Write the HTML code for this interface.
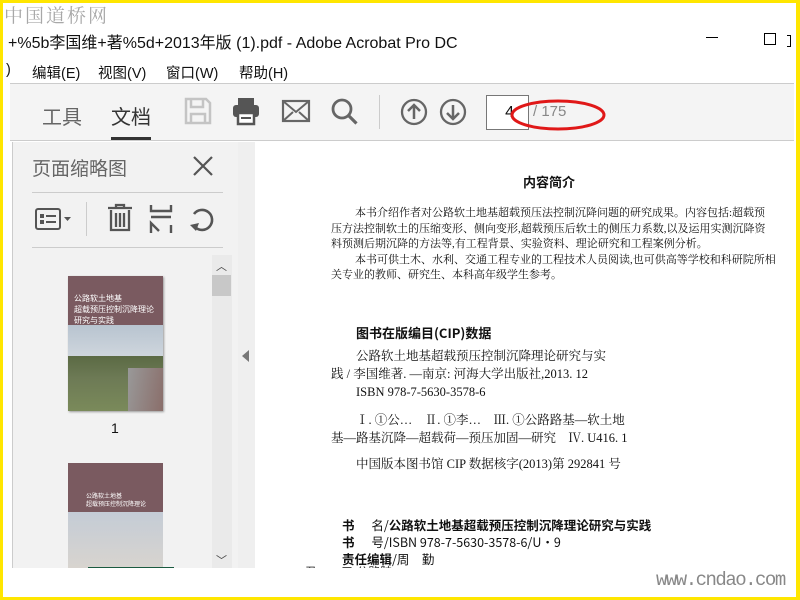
<!DOCTYPE html>
<html><head><meta charset="utf-8"><style>
*{margin:0;padding:0;box-sizing:border-box}
body{width:800px;height:600px;overflow:hidden;background:#fff;position:relative;font-family:"Liberation Sans","Noto Sans CJK SC",sans-serif}
.a{position:absolute}
.cn{font-family:"Liberation Serif","Noto Serif CJK SC",serif;color:#111}
</style></head><body>
<div class="a" style="left:0;top:0;width:800px;height:600px;border:3px solid #ffe600;border-right-width:4px;z-index:10;pointer-events:none"></div>
<div class="a" style="left:4px;top:1px;font-size:19px;color:#a8a8a8;font-family:'Noto Serif CJK SC',serif;letter-spacing:2px">中国道桥网</div>
<div class="a" style="left:8px;top:29px;font-size:16px;color:#111">+%5b李国维+著%5d+2013年版 (1).pdf - Adobe Acrobat Pro DC</div>
<div class="a" style="left:706px;top:37px;width:12px;height:1px;background:#000"></div>
<div class="a" style="left:764px;top:33px;width:12px;height:12px;border:1px solid #000"></div>
<div class="a" style="left:787px;top:35px;width:4px;height:12px;border:1px solid #000;border-left:none"></div>
<div class="a" style="left:6px;top:62px;font-size:14.5px;color:#111">)</div>
<div class="a" style="left:32px;top:62px;font-size:14.5px;color:#111">编辑(E)</div>
<div class="a" style="left:98px;top:62px;font-size:14.5px;color:#111">视图(V)</div>
<div class="a" style="left:166px;top:62px;font-size:14.5px;color:#111">窗口(W)</div>
<div class="a" style="left:239px;top:62px;font-size:14.5px;color:#111">帮助(H)</div>
<!-- toolbar -->
<div class="a" style="left:10px;top:83px;width:784px;height:58px;background:#f4f4f4;border-top:1px solid #ccc;border-bottom:1px solid #ccc"></div>
<div class="a" style="left:42px;top:101px;font-size:20px;color:#666">工具</div>
<div class="a" style="left:111px;top:101px;font-size:20px;color:#333">文档</div>
<div class="a" style="left:111px;top:137px;width:40px;height:3px;background:#333"></div>
<svg class="a" style="left:183px;top:96px" width="30" height="30" viewBox="0 0 30 30"><path d="M3 3h20l4 4v20H3z M8 3v8h12V3 M8 27v-9h14v9" fill="none" stroke="#c4c4c4" stroke-width="2.5"/></svg>
<svg class="a" style="left:231px;top:96px" width="30" height="30" viewBox="0 0 30 30"><rect x="7" y="2" width="16" height="8" fill="#555"/><rect x="2" y="9" width="26" height="12" rx="3" fill="#555"/><rect x="7" y="17" width="16" height="11" fill="#fff" stroke="#555" stroke-width="2.5"/><rect x="10" y="21" width="10" height="2" fill="#555"/></svg>
<svg class="a" style="left:281px;top:99px" width="30" height="24" viewBox="0 0 30 24"><rect x="2" y="2" width="26" height="20" fill="none" stroke="#666" stroke-width="2.2"/><path d="M2 2l13 11 13-11M2 22l10-9M28 22l-10-9" fill="none" stroke="#666" stroke-width="2"/></svg>
<svg class="a" style="left:330px;top:97px" width="30" height="30" viewBox="0 0 30 30"><circle cx="12" cy="12" r="9" fill="none" stroke="#666" stroke-width="2.8"/><path d="M18.5 18.5l8 8" stroke="#666" stroke-width="3.2"/></svg>
<div class="a" style="left:379px;top:95px;width:1px;height:34px;background:#ccc"></div>
<svg class="a" style="left:400px;top:98px" width="28" height="28" viewBox="0 0 28 28"><circle cx="14" cy="14" r="12" fill="none" stroke="#666" stroke-width="2.3"/><path d="M14 21V8M8 13l6-6 6 6" fill="none" stroke="#666" stroke-width="2.5"/></svg>
<svg class="a" style="left:439px;top:98px" width="28" height="28" viewBox="0 0 28 28"><circle cx="14" cy="14" r="12" fill="none" stroke="#666" stroke-width="2.3"/><path d="M14 7v13M8 15l6 6 6-6" fill="none" stroke="#666" stroke-width="2.5"/></svg>
<div class="a" style="left:486px;top:95px;width:43px;height:35px;border:1px solid #777;background:#fff;font-size:16px;text-align:right;padding:8px 14px 0 0;color:#111">4</div>
<div class="a" style="left:533px;top:103px;font-size:15px;color:#888">/ 175</div>
<svg class="a" style="left:508px;top:96px" width="100" height="40" viewBox="0 0 100 40"><ellipse cx="50" cy="19" rx="46" ry="14" fill="none" stroke="#e01818" stroke-width="3"/></svg>
<!-- left panel -->
<div class="a" style="left:12px;top:142px;width:226px;height:426px;background:#f2f2f2;border-left:1px solid #ccc"></div>
<div class="a" style="left:32px;top:154px;font-size:19px;color:#666">页面缩略图</div>
<svg class="a" style="left:192px;top:155px" width="22" height="22" viewBox="0 0 22 22"><path d="M2 2l18 18M20 2L2 20" stroke="#555" stroke-width="2.2"/></svg>
<div class="a" style="left:32px;top:192px;width:191px;height:1px;background:#ccc"></div>
<svg class="a" style="left:35px;top:207px" width="40" height="24" viewBox="0 0 40 24"><rect x="1" y="2" width="24" height="20" rx="2" fill="none" stroke="#555" stroke-width="2"/><rect x="5" y="7" width="4" height="4" fill="#555"/><rect x="5" y="13" width="4" height="4" fill="#555"/><rect x="11" y="8" width="10" height="2" fill="#555"/><rect x="11" y="14" width="10" height="2" fill="#555"/><path d="M29 10h7l-3.5 4z" fill="#555"/></svg>
<div class="a" style="left:86px;top:202px;width:1px;height:34px;background:#ccc"></div>
<svg class="a" style="left:106px;top:203px" width="28" height="30" viewBox="0 0 28 30"><path d="M2 5h24M10 5V2h8v3M5 7v20h18V7M10 10v14M14 10v14M18 10v14" fill="none" stroke="#555" stroke-width="2.3"/></svg>
<svg class="a" style="left:148px;top:205px" width="26" height="28" viewBox="0 0 26 28"><path d="M3 0v6h20V0M3 28V18l8 8M23 28V20M3 12h20" fill="none" stroke="#555" stroke-width="2.4"/></svg>
<svg class="a" style="left:189px;top:205px" width="28" height="28" viewBox="0 0 28 28"><path d="M6 22A10 10 0 1 0 5 9" fill="none" stroke="#555" stroke-width="2.6"/><path d="M1 20l6 6 3-8z" fill="#555"/></svg>
<div class="a" style="left:32px;top:247px;width:191px;height:1px;background:#ccc"></div>
<div class="a" style="left:212px;top:255px;width:20px;height:313px;background:#eaeaea"></div>
<div class="a" style="left:212px;top:275px;width:19px;height:21px;background:#c8c8c8"></div>
<div class="a" style="left:216px;top:258px;font-size:11px;color:#444">︿</div>
<div class="a" style="left:216px;top:552px;font-size:11px;color:#444">﹀</div>
<div class="a" style="left:68px;top:276px;width:95px;height:135px;background:#7a5a60;overflow:hidden;box-shadow:1px 1px 2px #999">
<div style="position:absolute;left:0;top:49px;width:95px;height:45px;background:linear-gradient(#b8c4d0,#d8dde2)"></div>
<div style="position:absolute;left:0;top:80px;width:95px;height:55px;background:linear-gradient(#5b6a44,#6d7a55 40%,#7a8a5a)"></div>
<div style="position:absolute;left:60px;top:92px;width:35px;height:43px;background:linear-gradient(100deg,#999,#8a6e6a)"></div>
<div style="position:absolute;left:6px;top:17px;font-size:8px;color:#fff;line-height:11px">公路软土地基<br>超载预压控制沉降理论<br>研究与实践</div></div>
<div class="a" style="left:111px;top:420px;font-size:14px;color:#111">1</div>
<div class="a" style="left:68px;top:463px;width:95px;height:105px;background:#7a5a60;overflow:hidden">
<div style="position:absolute;left:0;top:49px;width:95px;height:56px;background:linear-gradient(#c4ccd6,#d8d4cf)"></div>
<div style="position:absolute;left:18px;top:30px;font-size:6px;color:#fff;line-height:8px">公路软土地基<br>超载预压控制沉降理论</div></div>
<div class="a" style="left:88px;top:567px;width:86px;height:2px;background:#1a5a40"></div>
<!-- gutter -->
<div class="a" style="left:238px;top:142px;width:17px;height:426px;background:#efefef"></div>
<svg class="a" style="left:242px;top:350px" width="8" height="12"><path d="M7 0v12L0 6z" fill="#777"/></svg>
<!-- page text -->
<div class="a cn" style="left:523px;top:172px;font-size:13px;font-weight:bold;font-family:'Noto Sans CJK SC',sans-serif">内容简介</div>
<div class="a cn" style="left:331px;top:206px;width:440px;font-size:11px;line-height:15.5px;white-space:nowrap">
<div style="padding-left:24px">本书介绍作者对公路软土地基超载预压法控制沉降问题的研究成果。内容包括:超载预</div>
<div>压方法控制软土的压缩变形、侧向变形,超载预压后软土的侧压力系数,以及运用实测沉降资</div>
<div>料预测后期沉降的方法等,有工程背景、实验资料、理论研究和工程案例分析。</div>
<div style="padding-left:24px">本书可供土木、水利、交通工程专业的工程技术人员阅读,也可供高等学校和科研院所相</div>
<div>关专业的教师、研究生、本科高年级学生参考。</div></div>
<div class="a cn" style="left:356px;top:323px;font-size:13px;font-weight:bold;font-family:'Noto Sans CJK SC',sans-serif">图书在版编目(CIP)数据</div>
<div class="a cn" style="left:331px;top:347px;font-size:12.5px;line-height:18px;white-space:nowrap">
<div style="padding-left:25px">公路软土地基超载预压控制沉降理论研究与实</div>
<div>践 / 李国维著. —南京: 河海大学出版社,2013. 12</div>
<div style="padding-left:25px">ISBN 978-7-5630-3578-6</div>
<div style="height:10px"></div>
<div style="padding-left:25px">Ⅰ. ①公…　Ⅱ. ①李…　Ⅲ. ①公路路基—软土地</div>
<div>基—路基沉降—超载荷—预压加固—研究　Ⅳ. U416. 1</div>
<div style="height:8px"></div>
<div style="padding-left:25px">中国版本图书馆 CIP 数据核字(2013)第 292841 号</div></div>
<div class="a cn" style="left:342px;top:516px;font-size:12.5px;line-height:17px;white-space:nowrap;font-family:'Noto Sans CJK SC',sans-serif">
<div><b>书</b>&nbsp;&nbsp;&nbsp;&nbsp;&nbsp;&nbsp;名/<b>公路软土地基超载预压控制沉降理论研究与实践</b></div>
<div><b>书</b>&nbsp;&nbsp;&nbsp;&nbsp;&nbsp;&nbsp;号/ISBN 978-7-5630-3578-6/U・9</div>
<div><b>责任编辑</b>/周　勤</div></div>
<div class="a" style="left:0;top:568px;width:800px;height:32px;background:#fff"></div>
<div class="a" style="left:305px;top:563px;width:200px;height:5px;overflow:hidden;font-size:12px;color:#333">丑　　曰:公路陆</div>
<div class="a" style="left:656px;top:569px;font-size:19px;color:#888;font-family:'Liberation Mono',monospace;letter-spacing:-1.5px">www.cndao.com</div>
</body></html>
